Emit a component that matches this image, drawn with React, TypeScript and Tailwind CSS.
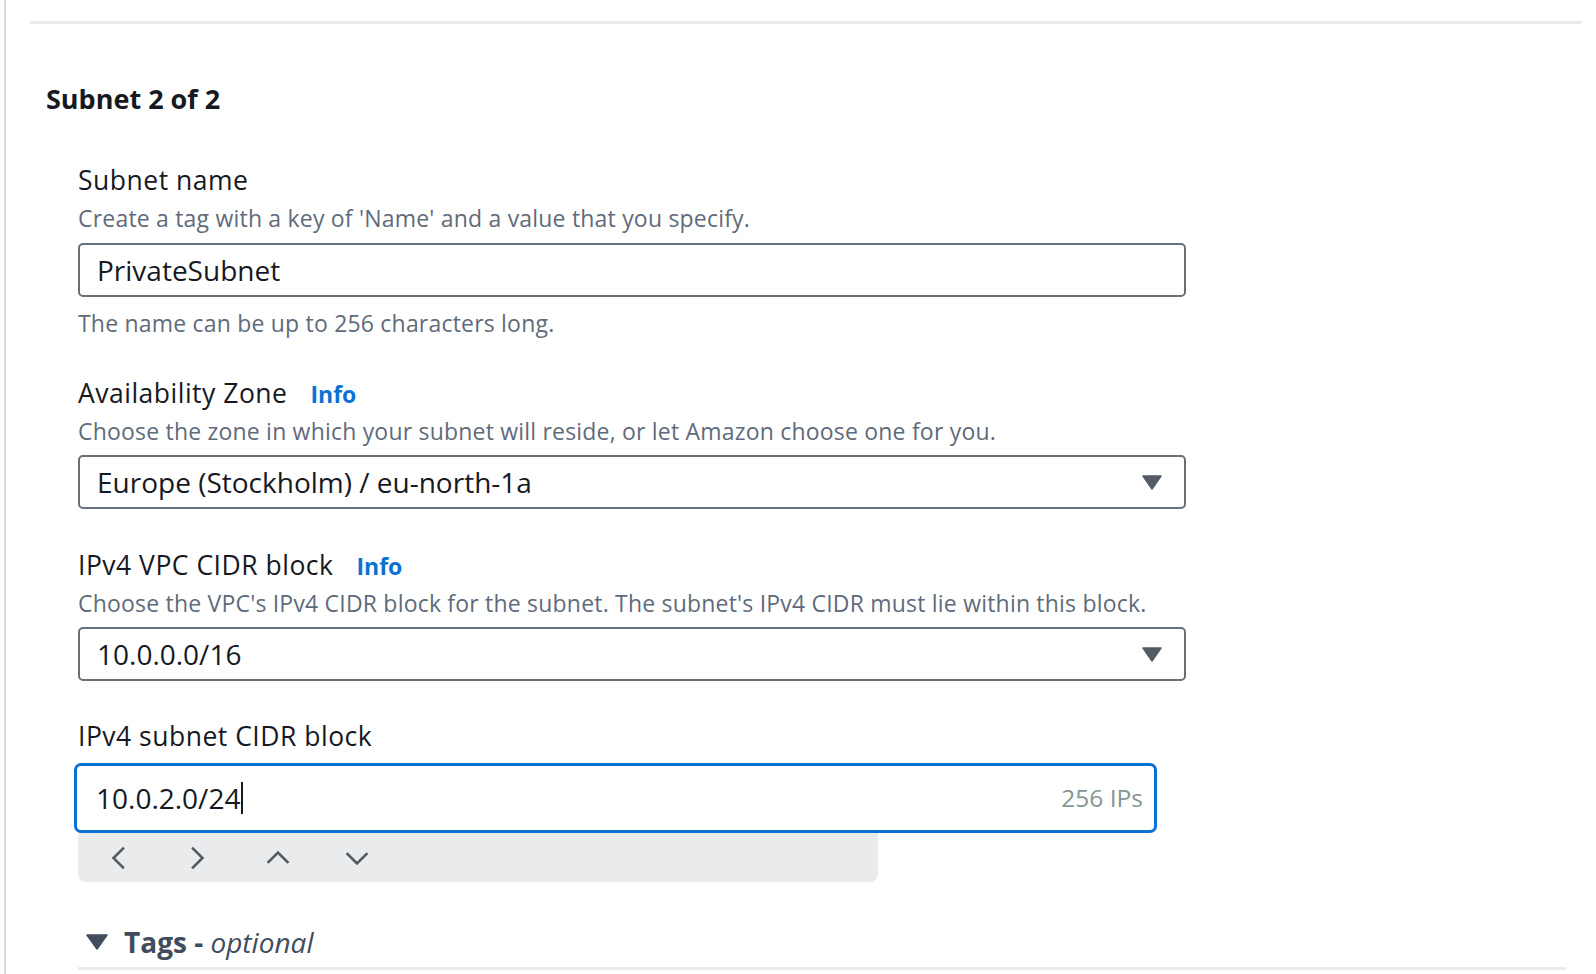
const font = { fontFamily: '"Open Sans", "Noto Sans", sans-serif' };

function Caret() {
  return (
    <svg width="20" height="15" viewBox="0 0 20 15" className="shrink-0">
      <path d="M1 1 H19 L10 14 Z" fill="#545b64" stroke="#545b64" strokeWidth="1.5" strokeLinejoin="round" />
    </svg>
  );
}

// chevron drawn pointing left, rotated for the other directions
function Chevron({ rotate }: { rotate: string }) {
  return (
    <svg width="24" height="24" viewBox="0 0 24 24" className={rotate}>
      <path d="M16 2.5 L6.5 12 L16 21.5" fill="none" stroke="#545b64" strokeWidth="2.6" strokeLinecap="square" />
    </svg>
  );
}

function Label({ text, info }: { text: string; info?: boolean }) {
  return (
    <div className="flex items-baseline gap-[23px] h-[36px] text-[26.5px] leading-[36px] tracking-[0.5px] text-[#16191f]">
      <span>{text}</span>
      {info && <span className="text-[23px] font-bold tracking-normal text-[#0972d3]">Info</span>}
    </div>
  );
}

function Desc({ text }: { text: string }) {
  return <div className="text-[23px] leading-[32px] tracking-[0.2px] text-[#5f6b7a]">{text}</div>;
}

function SelectBox({ value }: { value: string }) {
  return (
    <div className="mt-[8px] h-[54px] w-[1108px] flex items-center justify-between pl-[17px] pr-[22px] border-2 border-[#687078] rounded-[5px] text-[28px] text-[#16191f]">
      <span>{value}</span>
      <Caret />
    </div>
  );
}

export default function App() {
  return (
    <div className="min-h-[974px] bg-white flex" style={font}>
      {/* left rail */}
      <div className="ml-[4px] w-[2px] bg-[#d5dbdb]" />

      <div className="flex-1 pl-[24px] pr-[14px]">
        <div className="mt-[21px] h-[3px] bg-[#e9ebed]" />

        <h2 className="mt-[57px] ml-[16px] text-[27px] leading-[36px] font-bold text-[#16191f]">
          Subnet 2 of 2
        </h2>

        <div className="ml-[48px]">
          {/* Subnet name */}
          <div className="mt-[45px]">
            <Label text="Subnet name" />
            <div className="mt-[4px]">
              <Desc text="Create a tag with a key of 'Name' and a value that you specify." />
            </div>
            <div className="mt-[9px] h-[54px] w-[1108px] flex items-center pl-[17px] border-2 border-[#687078] rounded-[5px] text-[28px] text-[#16191f]">
              PrivateSubnet
            </div>
            <div className="mt-[10px]">
              <Desc text="The name can be up to 256 characters long." />
            </div>
          </div>

          {/* Availability Zone */}
          <div className="mt-[36px]">
            <Label text="Availability Zone" info />
            <div className="mt-[4px]">
              <Desc text="Choose the zone in which your subnet will reside, or let Amazon choose one for you." />
            </div>
            <SelectBox value="Europe (Stockholm) / eu-north-1a" />
          </div>

          {/* VPC CIDR */}
          <div className="mt-[38px]">
            <Label text="IPv4 VPC CIDR block" info />
            <div className="mt-[4px]">
              <Desc text="Choose the VPC's IPv4 CIDR block for the subnet. The subnet's IPv4 CIDR must lie within this block." />
            </div>
            <SelectBox value="10.0.0.0/16" />
          </div>

          {/* Subnet CIDR */}
          <div className="mt-[37px]">
            <Label text="IPv4 subnet CIDR block" />
            <div className="mt-[9px] -ml-[4px] h-[70px] w-[1083px] flex items-center justify-between pl-[19px] pr-[11px] border-[3px] border-[#0972d3] rounded-[7px] text-[28px]">
              <span className="flex items-center text-[#16191f]">
                10.0.2.0/24
                <span className="ml-[1px] w-[2px] h-[32px] bg-[#16191f]" />
              </span>
              <span className="text-[24.5px] text-[#879596]">256 IPs</span>
            </div>
            <div className="w-[800px] h-[49px] bg-[#e9ebed] rounded-b-[8px] flex items-center pl-[29px]">
              <Chevron rotate="" />
              <div className="ml-[54px]">
                <Chevron rotate="rotate-180" />
              </div>
              <div className="ml-[57px]">
                <Chevron rotate="rotate-90" />
              </div>
              <div className="ml-[55px]">
                <Chevron rotate="-rotate-90" />
              </div>
            </div>
          </div>

          {/* Tags */}
          <div className="mt-[42px] h-[36px] flex items-center gap-[16px] pl-[8px] text-[#414d5c]">
            <svg width="22" height="16" viewBox="0 0 22 16">
              <path d="M1 1 H21 L11 15 Z" fill="#414d5c" stroke="#414d5c" strokeWidth="1.5" strokeLinejoin="round" />
            </svg>
            <span className="text-[28px] leading-[36px]">
              <span className="font-bold">Tags - </span>
              <span className="italic">optional</span>
            </span>
          </div>
          <div className="mt-[7px] h-[3px] w-[1488px] bg-[#e9ebed]" />
        </div>
      </div>
    </div>
  );
}
